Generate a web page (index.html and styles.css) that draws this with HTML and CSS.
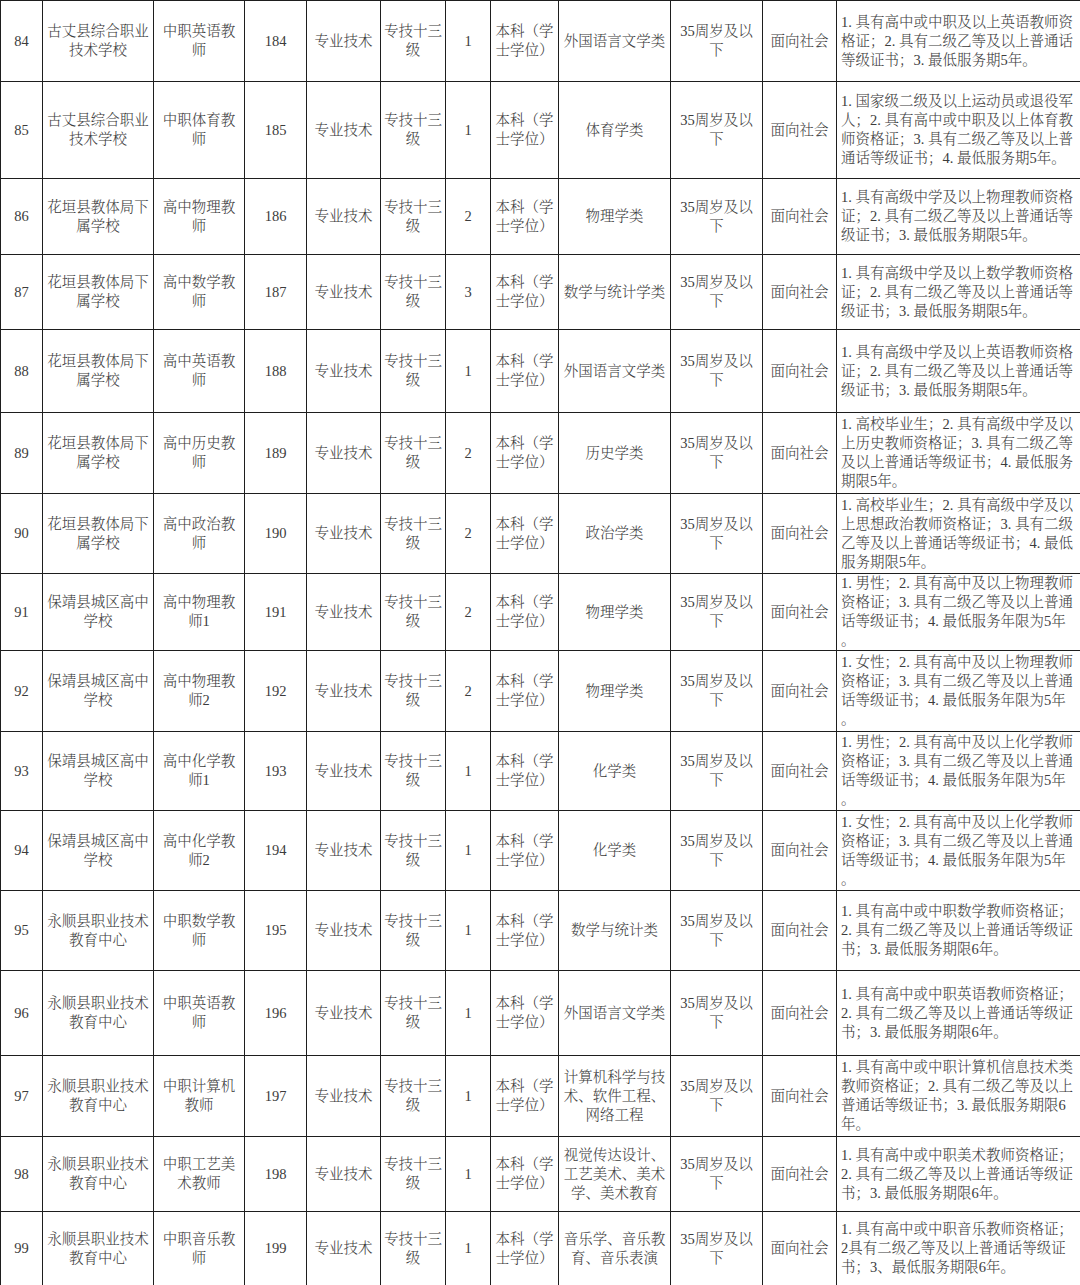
FILE: index.html
```html
<!DOCTYPE html>
<html lang="zh-CN">
<head>
<meta charset="utf-8">
<title>岗位表</title>
<link rel="stylesheet" href="styles.css">
</head>
<body>
<table class="posts">
<colgroup>
<col class="c-no"><col class="c-school"><col class="c-post"><col class="c-code"><col class="c-type"><col class="c-level"><col class="c-count"><col class="c-edu"><col class="c-major"><col class="c-age"><col class="c-scope"><col class="c-req">
</colgroup>
<tbody>
<tr><td>84</td><td>古丈县综合职业<br>技术学校</td><td>中职英语教<br>师</td><td>184</td><td>专业技术</td><td>专技十三<br>级</td><td>1</td><td>本科（学<br>士学位）</td><td>外国语言文学类</td><td>35周岁及以<br>下</td><td>面向社会</td><td class="req">1. 具有高中或中职及以上英语教师资<br>格证；2. 具有二级乙等及以上普通话<br>等级证书；3. 最低服务期5年。</td></tr>
<tr><td>85</td><td>古丈县综合职业<br>技术学校</td><td>中职体育教<br>师</td><td>185</td><td>专业技术</td><td>专技十三<br>级</td><td>1</td><td>本科（学<br>士学位）</td><td>体育学类</td><td>35周岁及以<br>下</td><td>面向社会</td><td class="req">1. 国家级二级及以上运动员或退役军<br>人；2. 具有高中或中职及以上体育教<br>师资格证；3. 具有二级乙等及以上普<br>通话等级证书；4. 最低服务期5年。</td></tr>
<tr><td>86</td><td>花垣县教体局下<br>属学校</td><td>高中物理教<br>师</td><td>186</td><td>专业技术</td><td>专技十三<br>级</td><td>2</td><td>本科（学<br>士学位）</td><td>物理学类</td><td>35周岁及以<br>下</td><td>面向社会</td><td class="req">1. 具有高级中学及以上物理教师资格<br>证；2. 具有二级乙等及以上普通话等<br>级证书；3. 最低服务期限5年。</td></tr>
<tr><td>87</td><td>花垣县教体局下<br>属学校</td><td>高中数学教<br>师</td><td>187</td><td>专业技术</td><td>专技十三<br>级</td><td>3</td><td>本科（学<br>士学位）</td><td>数学与统计学类</td><td>35周岁及以<br>下</td><td>面向社会</td><td class="req">1. 具有高级中学及以上数学教师资格<br>证；2. 具有二级乙等及以上普通话等<br>级证书；3. 最低服务期限5年。</td></tr>
<tr><td>88</td><td>花垣县教体局下<br>属学校</td><td>高中英语教<br>师</td><td>188</td><td>专业技术</td><td>专技十三<br>级</td><td>1</td><td>本科（学<br>士学位）</td><td>外国语言文学类</td><td>35周岁及以<br>下</td><td>面向社会</td><td class="req">1. 具有高级中学及以上英语教师资格<br>证；2. 具有二级乙等及以上普通话等<br>级证书；3. 最低服务期限5年。</td></tr>
<tr><td>89</td><td>花垣县教体局下<br>属学校</td><td>高中历史教<br>师</td><td>189</td><td>专业技术</td><td>专技十三<br>级</td><td>2</td><td>本科（学<br>士学位）</td><td>历史学类</td><td>35周岁及以<br>下</td><td>面向社会</td><td class="req">1. 高校毕业生；2. 具有高级中学及以<br>上历史教师资格证；3. 具有二级乙等<br>及以上普通话等级证书；4. 最低服务<br>期限5年。</td></tr>
<tr><td>90</td><td>花垣县教体局下<br>属学校</td><td>高中政治教<br>师</td><td>190</td><td>专业技术</td><td>专技十三<br>级</td><td>2</td><td>本科（学<br>士学位）</td><td>政治学类</td><td>35周岁及以<br>下</td><td>面向社会</td><td class="req">1. 高校毕业生；2. 具有高级中学及以<br>上思想政治教师资格证；3. 具有二级<br>乙等及以上普通话等级证书；4. 最低<br>服务期限5年。</td></tr>
<tr><td>91</td><td>保靖县城区高中<br>学校</td><td>高中物理教<br>师1</td><td>191</td><td>专业技术</td><td>专技十三<br>级</td><td>2</td><td>本科（学<br>士学位）</td><td>物理学类</td><td>35周岁及以<br>下</td><td>面向社会</td><td class="req">1. 男性；2. 具有高中及以上物理教师<br>资格证；3. 具有二级乙等及以上普通<br>话等级证书；4. 最低服务年限为5年<br>。</td></tr>
<tr><td>92</td><td>保靖县城区高中<br>学校</td><td>高中物理教<br>师2</td><td>192</td><td>专业技术</td><td>专技十三<br>级</td><td>2</td><td>本科（学<br>士学位）</td><td>物理学类</td><td>35周岁及以<br>下</td><td>面向社会</td><td class="req">1. 女性；2. 具有高中及以上物理教师<br>资格证；3. 具有二级乙等及以上普通<br>话等级证书；4. 最低服务年限为5年<br>。</td></tr>
<tr><td>93</td><td>保靖县城区高中<br>学校</td><td>高中化学教<br>师1</td><td>193</td><td>专业技术</td><td>专技十三<br>级</td><td>1</td><td>本科（学<br>士学位）</td><td>化学类</td><td>35周岁及以<br>下</td><td>面向社会</td><td class="req">1. 男性；2. 具有高中及以上化学教师<br>资格证；3. 具有二级乙等及以上普通<br>话等级证书；4. 最低服务年限为5年<br>。</td></tr>
<tr><td>94</td><td>保靖县城区高中<br>学校</td><td>高中化学教<br>师2</td><td>194</td><td>专业技术</td><td>专技十三<br>级</td><td>1</td><td>本科（学<br>士学位）</td><td>化学类</td><td>35周岁及以<br>下</td><td>面向社会</td><td class="req">1. 女性；2. 具有高中及以上化学教师<br>资格证；3. 具有二级乙等及以上普通<br>话等级证书；4. 最低服务年限为5年<br>。</td></tr>
<tr><td>95</td><td>永顺县职业技术<br>教育中心</td><td>中职数学教<br>师</td><td>195</td><td>专业技术</td><td>专技十三<br>级</td><td>1</td><td>本科（学<br>士学位）</td><td>数学与统计类</td><td>35周岁及以<br>下</td><td>面向社会</td><td class="req">1. 具有高中或中职数学教师资格证；<br>2. 具有二级乙等及以上普通话等级证<br>书；3. 最低服务期限6年。</td></tr>
<tr><td>96</td><td>永顺县职业技术<br>教育中心</td><td>中职英语教<br>师</td><td>196</td><td>专业技术</td><td>专技十三<br>级</td><td>1</td><td>本科（学<br>士学位）</td><td>外国语言文学类</td><td>35周岁及以<br>下</td><td>面向社会</td><td class="req">1. 具有高中或中职英语教师资格证；<br>2. 具有二级乙等及以上普通话等级证<br>书；3. 最低服务期限6年。</td></tr>
<tr><td>97</td><td>永顺县职业技术<br>教育中心</td><td>中职计算机<br>教师</td><td>197</td><td>专业技术</td><td>专技十三<br>级</td><td>1</td><td>本科（学<br>士学位）</td><td>计算机科学与技<br>术、软件工程、<br>网络工程</td><td>35周岁及以<br>下</td><td>面向社会</td><td class="req">1. 具有高中或中职计算机信息技术类<br>教师资格证；2. 具有二级乙等及以上<br>普通话等级证书；3. 最低服务期限6<br>年。</td></tr>
<tr><td>98</td><td>永顺县职业技术<br>教育中心</td><td>中职工艺美<br>术教师</td><td>198</td><td>专业技术</td><td>专技十三<br>级</td><td>1</td><td>本科（学<br>士学位）</td><td>视觉传达设计、<br>工艺美术、美术<br>学、美术教育</td><td>35周岁及以<br>下</td><td>面向社会</td><td class="req">1. 具有高中或中职美术教师资格证；<br>2. 具有二级乙等及以上普通话等级证<br>书；3. 最低服务期限6年。</td></tr>
<tr><td>99</td><td>永顺县职业技术<br>教育中心</td><td>中职音乐教<br>师</td><td>199</td><td>专业技术</td><td>专技十三<br>级</td><td>1</td><td>本科（学<br>士学位）</td><td>音乐学、音乐教<br>育、音乐表演</td><td>35周岁及以<br>下</td><td>面向社会</td><td class="req">1. 具有高中或中职音乐教师资格证；<br>2具有二级乙等及以上普通话等级证<br>书；3、最低服务期限6年。</td></tr>
</tbody>
</table>
</body>
</html>
```
FILE: styles.css
```css
html, body {
  margin: 0;
  padding: 0;
  background: #ffffff;
}

.posts {
  width: 1080px;
  table-layout: fixed;
  border-collapse: collapse;
  font-family: "Liberation Serif", "Noto Serif CJK SC", "Noto Sans CJK SC", serif;
  font-size: 14.5px;
  line-height: 19px;
  font-weight: 300;
  color: #3c3c3c;
}

.posts td {
  border: 1px solid #1e1e1e;
  padding: 0;
  text-align: center;
  vertical-align: middle;
  white-space: nowrap;
  overflow: hidden;
}

.posts td.req {
  text-align: left;
  padding-left: 4px;
}

.c-no { width: 42px; }
.c-school { width: 111px; }
.c-post { width: 91px; }
.c-code { width: 62px; }
.c-type { width: 74px; }
.c-level { width: 65px; }
.c-count { width: 45px; }
.c-edu { width: 68px; }
.c-major { width: 112px; }
.c-age { width: 92px; }
.c-scope { width: 74px; }
.c-req { width: 244px; }

.posts tr:nth-child(1) { height: 81px; }
.posts tr:nth-child(2) { height: 97px; }
.posts tr:nth-child(3) { height: 76px; }
.posts tr:nth-child(4) { height: 75px; }
.posts tr:nth-child(5) { height: 83px; }
.posts tr:nth-child(6) { height: 81px; }
.posts tr:nth-child(7) { height: 80px; }
.posts tr:nth-child(8) { height: 76px; }
.posts tr:nth-child(9) { height: 81px; }
.posts tr:nth-child(10) { height: 79px; }
.posts tr:nth-child(11) { height: 80px; }
.posts tr:nth-child(12) { height: 80px; }
.posts tr:nth-child(13) { height: 85px; }
.posts tr:nth-child(14) { height: 81px; }
.posts tr:nth-child(15) { height: 75px; }
.posts tr:nth-child(16) { height: 74px; }
```
